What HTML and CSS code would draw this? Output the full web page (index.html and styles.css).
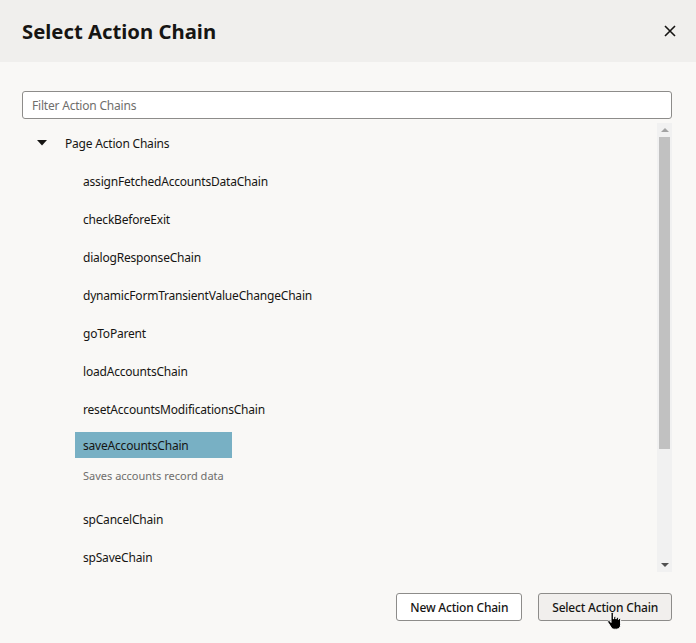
FILE: index.html
```html
<!DOCTYPE html>
<html>
<head>
<meta charset="utf-8">
<link rel="stylesheet" href="styles.css">
</head>
<body>
<div class="dialog">
  <header class="header">
    <h1 class="title">Select Action Chain</h1>
    <button class="close" aria-label="Close">
      <svg width="12" height="12" viewBox="0 0 12 12"><path d="M1 1L11 11M11 1L1 11" stroke="#161513" stroke-width="1.6" fill="none"/></svg>
    </button>
  </header>
  <main class="body">
    <div class="filter">Filter Action Chains</div>
    <div class="tree-wrap">
      <div class="tree">
        <div class="group-row">
          <svg class="caret" width="10" height="6" viewBox="0 0 10 6"><path d="M0 0H10L5 5.5Z" fill="#161513"/></svg>
          <span>Page Action Chains</span>
        </div>
        <div class="item">assignFetchedAccountsDataChain</div>
        <div class="item">checkBeforeExit</div>
        <div class="item">dialogResponseChain</div>
        <div class="item">dynamicFormTransientValueChangeChain</div>
        <div class="item">goToParent</div>
        <div class="item">loadAccountsChain</div>
        <div class="item">resetAccountsModificationsChain</div>
        <div class="selected-wrap">
          <div class="selected">
            <div class="sel-label">saveAccountsChain</div>
            <div class="sel-desc">Saves accounts record data</div>
          </div>
        </div>
        <div class="item">spCancelChain</div>
        <div class="item">spSaveChain</div>
      </div>
      <div class="scrollbar">
        <div class="arrow up"></div>
        <div class="track"><div class="thumb"></div></div>
        <div class="arrow down"></div>
      </div>
    </div>
    <div class="footer">
      <button class="btn">New Action Chain</button>
      <button class="btn btn-hover">Select Action Chain
        <svg class="cursor" width="16" height="18" viewBox="0 0 16 18"><path d="M5 1.5c0-.8.6-1.3 1.2-1.3s1.2.5 1.2 1.3V7h.3V5.6c0-.7.5-1.1 1.1-1.1s1.1.4 1.1 1.1V7h.3V6.3c0-.7.5-1.1 1.1-1.1s1.1.4 1.1 1.1V7.5h.2c0-.6.5-1 1-1s1 .4 1 1.1v5.2c0 2.5-1.6 4.4-4 4.4H8.4c-1.6 0-2.6-.8-3.4-2L2 10.4c-.4-.6-.2-1.3.3-1.6.5-.4 1.2-.2 1.6.3L5 10.5Z" fill="#000" stroke="#fff" stroke-width="1"/></svg>
      </button>
    </div>
  </main>
</div>
</body>
</html>
```
FILE: styles.css
```css
* { box-sizing: border-box; }
html, body { margin: 0; padding: 0; }
body {
  width: 696px;
  height: 643px;
  background: #f9f8f6;
  font-family: "Noto Sans", "Open Sans", sans-serif;
  color: #161513;
  overflow: hidden;
}
.dialog { display: flex; flex-direction: column; height: 643px; }
.header {
  height: 62px;
  background: #f0efed;
  display: flex;
  align-items: center;
  justify-content: space-between;
  padding: 0 20px 0 22px;
}
.title {
  margin: 0;
  font-size: 20.3px;
  font-weight: 700;
  padding-bottom: 1px;
}
.close {
  border: 0;
  background: transparent;
  padding: 0;
  width: 12px;
  height: 12px;
  display: flex;
}
.body {
  flex: 1;
  padding: 29px 24px 0 22px;
  display: flex;
  flex-direction: column;
}
.filter {
  height: 28px;
  border: 1px solid #8d8c8a;
  border-radius: 3px;
  background: #fff;
  font-size: 12px;
  letter-spacing: -0.2px;
  color: #6f6e6c;
  padding: 0 9px;
  display: flex;
  align-items: center;
}
.tree-wrap {
  margin-top: 4px;
  height: 449px;
  display: flex;
}
.tree {
  flex: 1;
  overflow: hidden;
  font-size: 12px;
  letter-spacing: -0.2px;
  padding-top: 1px;
}
.group-row {
  height: 38px;
  display: flex;
  align-items: center;
  padding-left: 15px;
}
.caret { margin-right: 18px; }
.item {
  height: 38px;
  line-height: 36px;
  padding: 2px 0 0 61px;
  white-space: nowrap;
}
.selected-wrap {
  height: 72px;
  padding: 4px 0 0 53px;
}
.selected { display: inline-block; }
.sel-label {
  background: #78b0c4;
  height: 26px;
  line-height: 25px;
  padding: 1px 8px 0 8px;
}
.sel-desc {
  font-size: 11px;
  letter-spacing: 0;
  color: #6f6e6c;
  padding: 0 8px 0 8px;
  line-height: 18px;
  margin-top: 9px;
}
.scrollbar {
  width: 15px;
  background: #f1f1f1;
  display: flex;
  flex-direction: column;
  align-items: center;
}
.arrow { width: 0; height: 0; margin: 5px 0; }
.arrow.up { border-left: 4px solid transparent; border-right: 4px solid transparent; border-bottom: 4px solid #a3a3a3; }
.arrow.down { border-left: 4px solid transparent; border-right: 4px solid transparent; border-top: 4px solid #505050; }
.track { flex: 1; width: 11px; }
.thumb { height: 312px; background: #c1c1c1; }
.footer {
  display: flex;
  justify-content: flex-end;
  gap: 16px;
  margin-top: 21px;
}
.btn {
  position: relative;
  height: 28px;
  border: 1px solid #8d8c8a;
  border-radius: 3px;
  background: #fff;
  font-family: "Noto Sans", "Open Sans", sans-serif;
  font-size: 12px;
  letter-spacing: -0.2px;
  font-weight: 500;
  color: #161513;
  padding: 0 13px;
}
.btn-hover { background: #f1efed; }
.cursor { position: absolute; left: 67px; top: 18px; }
```
